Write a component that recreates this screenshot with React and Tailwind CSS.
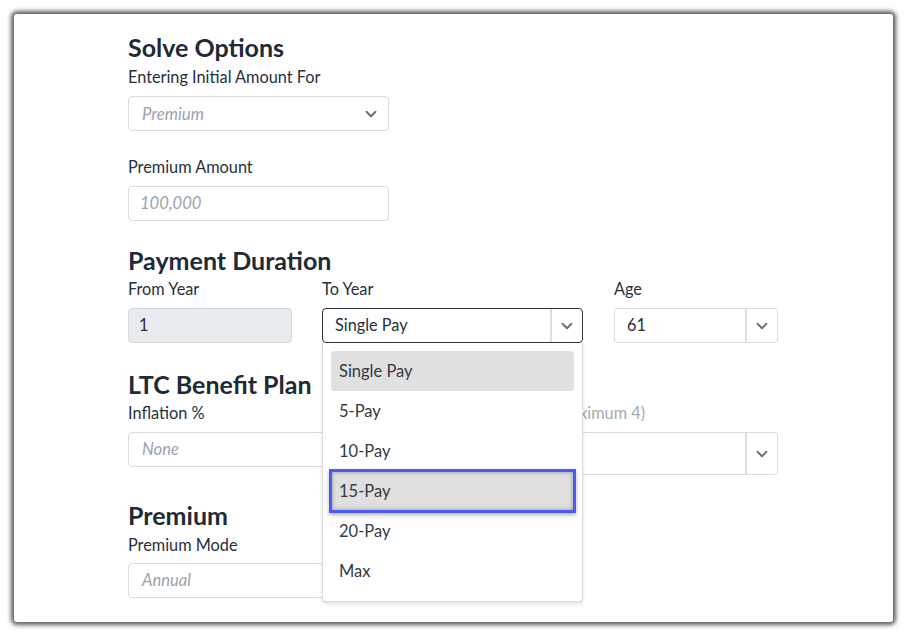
import { ChevronDown } from 'lucide-react';

const font = { fontFamily: 'Lato, "Open Sans", sans-serif' };

function Heading({ children, className = '' }) {
    return <h2 className={`text-[25px] leading-[28px] font-bold text-[#1f2a37] ${className}`}>{children}</h2>;
}

function Label({ children, className = '' }) {
    return <div className={`text-[16.3px] leading-[20px] text-[#27303b] ${className}`}>{children}</div>;
}

function Chevron() {
    return <ChevronDown size={18} strokeWidth={2.5} className="text-[#6f6f6f]" />;
}

function PlainSelect({ placeholder, className = '' }) {
    return (
        <div className={`flex h-[35px] items-center justify-between rounded border border-[#dcdcdc] bg-white pl-[13px] pr-[8px] ${className}`}>
            <span className="text-[16.8px] italic text-[#9aa3ad]">{placeholder}</span>
            <Chevron />
        </div>
    );
}

function SplitSelect({ value, active, className = '', height = 'h-[35px]' }) {
    return (
        <div className={`flex ${height} rounded border ${active ? 'border-[#2a323c]' : 'border-[#dcdcdc]'} bg-white ${className}`}>
            <div className="flex flex-1 items-center pl-[12px] text-[16.3px] text-[#27303b]">{value}</div>
            <div className="flex w-[32px] items-center justify-center border-l-2 border-[#dedede]">
                <Chevron />
            </div>
        </div>
    );
}

const options = ['Single Pay', '5-Pay', '10-Pay', '15-Pay', '20-Pay', 'Max'];

export default function App() {
    return (
        <div className="min-h-[637px] w-[908px] bg-white pl-[14px] pt-[14px]" style={font}>
            <div className="h-[608px] w-[879px] rounded-[3px] bg-white pl-[114px] pt-[19px] shadow-[0_0_4px_3px_rgba(55,55,55,0.8)]">
                <Heading>Solve Options</Heading>
                <Label className="mt-[6px]">Entering Initial Amount For</Label>
                <PlainSelect placeholder="Premium" className="mt-[9px] w-[261px]" />

                <Label className="mt-[26px]">Premium Amount</Label>
                <div className="mt-[9px] flex h-[35px] w-[261px] items-center rounded border border-[#dcdcdc] pl-[11px] text-[16.6px] italic text-[#9aa3ad]">
                    100,000
                </div>

                <Heading className="mt-[25px]">Payment Duration</Heading>
                <div className="mt-[5px] flex">
                    <div className="w-[164px]">
                        <Label>From Year</Label>
                        <div className="mt-[9px] flex h-[35px] items-center rounded border border-[#d6d9dc] bg-[#e8ebee] pl-[10px] text-[16.3px] text-[#27303b]">
                            1
                        </div>
                    </div>
                    <div className="relative ml-[30px] w-[261px]">
                        <Label>To Year</Label>
                        <SplitSelect value="Single Pay" active className="mt-[9px]" />
                        <div className="absolute left-0 top-[64px] z-10 w-[261px] rounded-b border border-t-0 border-[#dcdcdc] bg-white px-[8px] pb-[10px] pt-[8px] shadow-[0_2px_4px_rgba(0,0,0,0.12)]">
                            {options.map((o) =>
                                o === 'Single Pay' ? (
                                    <div key={o} className="flex h-[40px] items-center rounded-[4px] bg-[#e0e0e0] pl-[8px] text-[16.5px] text-[#333a42]">
                                        {o}
                                    </div>
                                ) : o === '15-Pay' ? (
                                    <div key={o} className="relative z-10 -mx-[2px] -my-[2px] flex h-[44px] items-center border-[3px] border-[#4a5cf2] bg-[#e0e0e0] pl-[7px] text-[16.5px] text-[#333a42] shadow-[inset_0_0_4px_rgba(0,0,0,0.35),0_2px_4px_rgba(0,0,0,0.3)]">
                                        {o}
                                    </div>
                                ) : (
                                    <div key={o} className="flex h-[40px] items-center pl-[8px] text-[16.5px] text-[#333a42]">
                                        {o}
                                    </div>
                                )
                            )}
                        </div>
                    </div>
                    <div className="ml-[31px] w-[164px]">
                        <Label>Age</Label>
                        <SplitSelect value="61" className="mt-[9px]" />
                    </div>
                </div>

                <Heading className="mt-[27px]">LTC Benefit Plan</Heading>
                <div className="mt-[5px] flex gap-[31px]">
                    <div className="w-[261px]">
                        <Label>Inflation %</Label>
                        <div className="mt-[9px] flex h-[35px] items-center rounded border border-[#dcdcdc] pl-[13px] text-[16.6px] italic text-[#9aa3ad]">
                            None
                        </div>
                    </div>
                    <div className="w-[358px]">
                        <Label className="text-right text-[#a3a9b0]">
                            <span className="pr-[133px]">Inflation Years (Maximum 4)</span>
                        </Label>
                        <SplitSelect value="" className="mt-[9px]" height="h-[43px]" />
                    </div>
                </div>

                <Heading className="mt-[26px]">Premium</Heading>
                <Label className="mt-[6px]">Premium Mode</Label>
                <div className="mt-[8px] flex h-[35px] w-[261px] items-center rounded border border-[#dcdcdc] pl-[13px] text-[16.6px] italic text-[#9aa3ad]">
                    Annual
                </div>
            </div>
        </div>
    );
}
